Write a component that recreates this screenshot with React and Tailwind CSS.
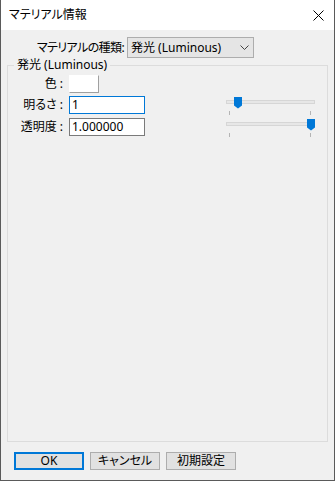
import React from "react";

const font = "font-['Noto_Sans','Noto_Sans_CJK_JP',sans-serif] [font-feature-settings:'palt']";

const Slider = ({ thumbLeft }) => (
  <div className="relative ml-auto mr-[12px] w-[89px] h-[18px]">
    <div className="mt-[4px] h-[4px] w-full bg-[#e7e7e7] border border-[#d6d6d6]" />
    <svg
      className="absolute top-[1px]"
      style={{ left: thumbLeft }}
      width="8"
      height="12"
      viewBox="0 0 8 12"
    >
      <path d="M0 0H8V8.5L4 11.5L0 8.5Z" fill="#0078d7" />
    </svg>
    <div className="absolute left-[3px] top-[15px] w-px h-[4px] bg-[#b4b4b4]" />
    <div className="absolute left-[84px] top-[15px] w-px h-[4px] bg-[#b4b4b4]" />
  </div>
);

const Button = ({ children, primary }) => (
  <button
    className={
      primary
        ? "w-[70px] h-[18px] bg-[#e1e1e1] border-2 border-[#0078d7] text-[12px] leading-none text-black flex items-center justify-center"
        : "w-[70px] h-[18px] bg-[#e1e1e1] border border-[#adadad] text-[12px] leading-none text-black flex items-center justify-center"
    }
  >
    {children}
  </button>
);

export default function App() {
  return (
    <div className={`w-[335px] h-[481px] flex flex-col bg-[#f0f0f0] border-x border-b border-[#5a5a5a] text-black ${font}`}>
      {/* title bar */}
      <div className="h-[30px] bg-white flex items-center pl-[8px] pr-[10px] shrink-0">
        <span className="text-[12px] leading-none">マテリアル情報</span>
        <svg className="ml-auto" width="11" height="11" viewBox="0 0 11 11">
          <path d="M0.5 0.5L10.5 10.5M10.5 0.5L0.5 10.5" stroke="#000" strokeWidth="1" />
        </svg>
      </div>

      <div className="flex-1 flex flex-col pb-[10px]">
        {/* material type */}
        <div className="flex items-center mt-[7px]">
          <div className="w-[126px] pr-[3px] text-right text-[12px] leading-none tracking-[-0.6px]">マテリアルの種類:</div>
          <div className="w-[127px] h-[21px] bg-[#e5e5e5] border border-[#adadad] flex items-center pl-[3px] pr-[4px]">
            <span className="text-[12px] leading-none">発光 (Luminous)</span>
            <svg className="ml-auto" width="9" height="5" viewBox="0 0 9 5">
              <path d="M0.5 0.5L4.5 4.5L8.5 0.5" stroke="#444" strokeWidth="1" fill="none" />
            </svg>
          </div>
        </div>

        {/* group */}
        <fieldset className="flex-1 mx-[6px] border border-[#dcdcdc] min-w-0">
          <legend className="ml-[6px] px-[3px] text-[12px] leading-[14px]">発光 (Luminous)</legend>

          <div className="flex items-center mt-[3px] h-[18px]">
            <div className="w-[58px] pr-[3px] text-right text-[12px] leading-none">色 :</div>
            <div className="ml-[3px] w-[30px] h-[18px] bg-white border border-white border-r-[#a0a0a0] border-b-[#a0a0a0]" />
          </div>

          <div className="flex items-start mt-[3px] h-[18px]">
            <div className="w-[58px] h-[18px] pr-[3px] flex items-center justify-end text-[12px] leading-none">明るさ :</div>
            <div className="ml-[3px] w-[76px] h-[18px] bg-white border border-[#0078d7] flex items-center pl-[2px] text-[12px] leading-none">
              1
            </div>
            <Slider thumbLeft={8} />
          </div>

          <div className="flex items-start mt-[4px] h-[18px]">
            <div className="w-[58px] h-[18px] pr-[3px] flex items-center justify-end text-[12px] leading-none">透明度 :</div>
            <div className="ml-[3px] w-[76px] h-[18px] bg-white border border-[#7a7a7a] flex items-center pl-[2px] text-[12px] leading-none">
              1.000000
            </div>
            <Slider thumbLeft={81} />
          </div>
        </fieldset>

        {/* buttons */}
        <div className="flex gap-[6px] mt-[10px] pl-[13px]">
          <Button primary>OK</Button>
          <Button>キャンセル</Button>
          <Button>初期設定</Button>
        </div>
      </div>
    </div>
  );
}
